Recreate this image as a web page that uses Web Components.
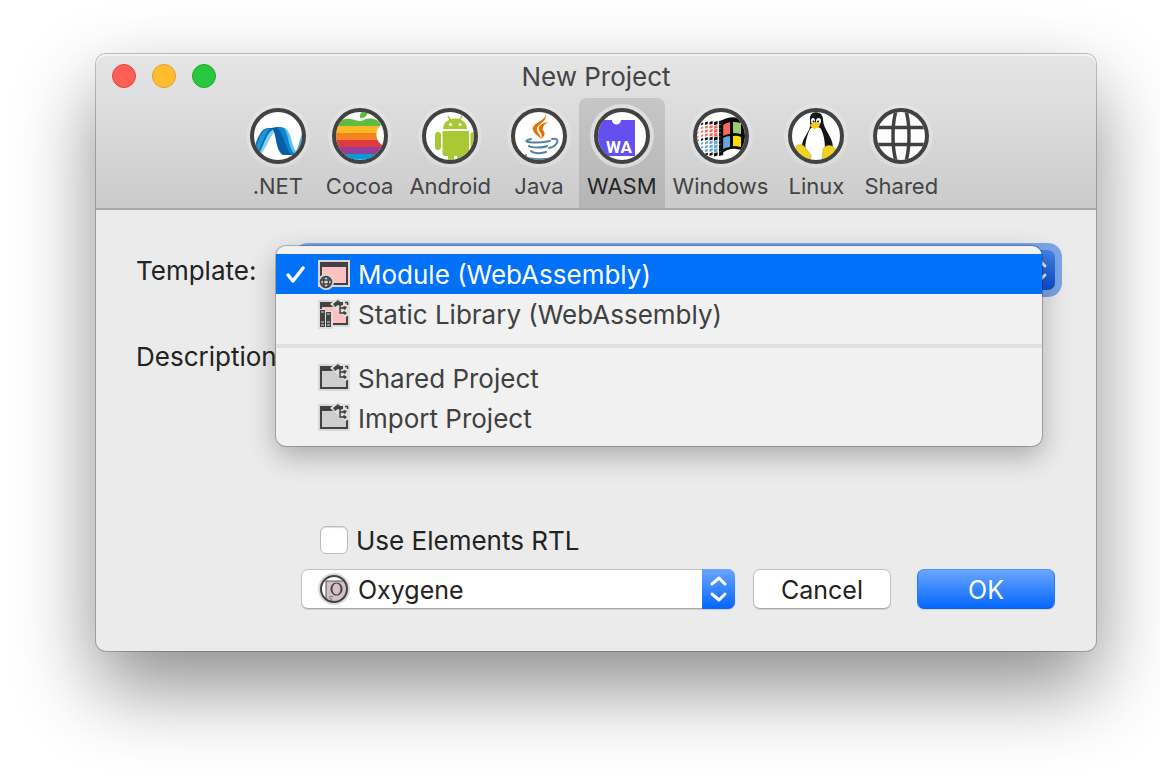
<!DOCTYPE html>
<html lang="en">
<head>
<meta charset="utf-8">
<title>New Project</title>
<style>
    body {
        box-sizing: border-box;
        min-height: 100vh;
        margin: 0;
        padding: 54px 64px 64px 96px;
        background: #fff;
        font-family: Inter, "Liberation Sans", sans-serif;
        font-size: 26px;
        line-height: 40px;
        color: #222;
    }
</style>
</head>
<body>
<new-project-window></new-project-window>

<script>
const define = (name, html, setup) => {
    const template = document.createElement('template');
    template.innerHTML = html;
    customElements.define(name, class extends HTMLElement {
        constructor() {
            super();
            this.attachShadow({ mode: 'open' });
            this.shadowRoot.appendChild(template.content.cloneNode(true));
        }

        connectedCallback() {
            if (setup) setup(this, this.shadowRoot);
        }
    });
};

// The trail of squares behind the Windows flag: they shrink towards the left
const flagTrail = () => {
    const columns = [[4, 1.6], [8, 2.2], [12, 2.8], [16.5, 3.2], [21, 3.6], [26, 4.2]];
    const rows = ['k', 'r', 'r', 'r', 'k', 'b', 'b', 'b', 'k'];
    const colors = { k: '#111', r: '#f7685e', b: '#62a7d9' };
    let out = '';
    rows.forEach((row, j) => {
        columns.forEach(([x, size], i) => {
            const y = 13 + j * 3.9 + [4, 2.5, 1.5, 1, 1, 0][i];
            const fill = i === 5 ? '#111' : colors[row];
            out += `<path d="M${x} ${y}l${size} -1v${size - 0.4}l${-size} 1z" fill="${fill}"/>`;
        });
    });
    return out;
};

// Platform logos, drawn in a 56x56 box and clipped to the inner circle
const platformArt = {
    net: `
        <path d="M2 48C8 26 12 20 19 20H26C19 25 15 38 11 45L4 52Z" fill="#0a6cb4"/>
        <path d="M5 42C9 28 13 21 20 20C15 26 11 38 8 45Z" fill="#1c97d8"/>
        <path d="M9 46C15 34 17 24 24 21L26 22C20 28 17 38 12 45Z" fill="#7fd0f2"/>
        <path d="M22 20Q28 18 33 20C40 24 41 40 46 46L44 47H33C25 42 27 27 22 20Z" fill="#0a5ea6"/>
        <path d="M27 20Q32 18 36 21C41 27 41 40 47 45L42 47C34 40 35 26 27 20Z" fill="#0b86cf"/>
        <path d="M34 20C42 22 41 40 47 44L45 46C38 40 39 27 34 20Z" fill="#5cc3ef"/>
        <path d="M43 47C49 42 49 31 53 24V40L47 47Z" fill="#35b0e8"/>
        <path d="M46 46C50 42 51 36 54 31V42Z" fill="#0a73bd"/>`,
    cocoa: `
        <path d="M28 10C27 5 31 2 36 1C36 7 34 10 28 10Z" fill="#5ebd3e"/>
        <clipPath id="apple"><path d="M4 19C8 9 17 10 23 12Q28 14 32 12C38 9 47 11 49 17C42 23 43 34 52 38L42 53H32Q28 50 24 53H10Q0 35 4 19Z"/></clipPath>
        <g clip-path="url(#apple)">
            <path fill="#5ebd3e" d="M0 0h56v18H0z"/><path fill="#fdb924" d="M0 18h56v7H0z"/>
            <path fill="#f58220" d="M0 25h56v7H0z"/><path fill="#e03a3e" d="M0 32h56v7H0z"/>
            <path fill="#963d97" d="M0 39h56v7H0z"/><path fill="#009ddc" d="M0 46h56v8H0z"/>
        </g>`,
    android: `
        <g fill="#a9c834">
            <path d="M21 21C21 7 45 7 45 21Z"/>
            <path d="M26 8L29 13M40 8L37 13" stroke="#a9c834" stroke-width="1.5"/>
            <rect x="13" y="24" width="6" height="18" rx="3"/>
            <path d="M20.500 23H47V46Q47 48 45 48H41V54H35V48H32V54H26V48H23Q20.500 48 20.500 46Z"/>
            <rect x="48.500" y="24" width="6" height="18" rx="3"/>
        </g>
        <circle cx="28.500" cy="16.500" r="1.500" fill="#fff"/><circle cx="38" cy="16.500" r="1.500" fill="#fff"/>`,
    java: `
        <path d="M34 4C38 13 20 14 22 22C23 26 28 28 30 31C30 27 25 24 26 20C28 15 38 13 34 4Z" fill="#e76f00"/>
        <path d="M38 14C30 15 27 18 28 22C29 25 32 26 30 31C35 27 34 25 32 22C31 19 33 16 38 14Z" fill="#e76f00"/>
        <g fill="none" stroke="#5382a1" stroke-width="2" stroke-linecap="round">
            <path d="M20 31C7 34 24 36 39 33M41 31C50 29 47 38 38 40"/>
            <path d="M18 38C21 40 32 40 36 38M20 43C23 46 31 45 35 44"/>
            <path d="M15 47C9 51 34 53 45 49M23 54Q38 55 46 51"/>
        </g>`,
    wasm: `
        <path d="M4 12H18A4.500 4.500 0 0 0 27 12H41V48H4Z" fill="#654ff0"/>
        <text x="12" y="45" font-family="Roboto, sans-serif" font-size="17" font-weight="700" fill="#fff">WA</text>`,
    windows: `
        <path d="M28 13Q40 5 54 14V45Q40 36 28 46Z" fill="#080808"/>
        <path d="M30 17Q33 15 37 14V26Q34 26 30 28Z" fill="#f7685e"/>
        <path d="M40 14Q44 14 48 15V26Q44 25 40 25Z" fill="#9bc973"/>
        <path d="M30 30Q33 28 37 28V39Q34 39 30 41Z" fill="#62a7d9"/>
        <path d="M40 28Q44 27 48 29V39Q44 38 40 38Z" fill="#fddc00"/>
        ${flagTrail()}`,
    linux: `
        <path d="M22 11C21 2 35 2 35 11C35 22 45 28 45 40L39 48H18L14 38C14 30 23 23 22 16Z" fill="#151515"/>
        <path d="M22 21C24 19 31 18 33 21C38 31 38 47 34 50H21C15 43 17 32 22 21Z" fill="#fff"/>
        <ellipse cx="25" cy="13" rx="2" ry="3" fill="#fff"/><ellipse cx="30.500" cy="13" rx="2.500" ry="3" fill="#fff"/>
        <circle cx="25.500" cy="13.500" r="1"/><circle cx="30" cy="13.500" r="1"/>
        <path d="M22 17Q27 12 32 16Q32 19 27 21Q23 20 22 17Z" fill="#f6c915"/>
        <path d="M8 38Q13 35 16 38L23 47Q24 53 17 52L8 49ZM35 41Q38 36 44 38L50 43L39 52H34Z" fill="#f2d31f" stroke="#c99b10" stroke-width=".5"/>`,
    shared: `
        <g fill="none" stroke="#424242" stroke-width="3.500">
            <ellipse cx="28" cy="28" rx="8" ry="32"/>
            <path d="M3 19.500H53M3 36.500H53"/>
        </g>`
};

define('platform-tab', `
<style>
    :host {
        display: flex;
    }

    button {
        display: flex;
        flex-direction: column;
        align-items: center;
        min-width: 80px;
        padding: 6px 8px 3px;
        border: 0;
        border-radius: 8px 8px 0 0;
        background: none;
        font: inherit;
        font-size: 22px;
        line-height: 37px;
        color: #444;
    }

    :host([selected]) button {
        background: linear-gradient(#c6c6c6, #b5b5b5);
        color: #262626;
    }

    svg {
        width: 64px;
        height: 64px;
    }
</style>
<button type="button" role="tab">
    <svg viewBox="-4 -4 64 64" aria-hidden="true">
        <clipPath id="disc"><circle cx="28" cy="28" r="24"/></clipPath>
        <circle class="halo" cx="28" cy="28" r="32" fill="#fff" opacity=".2"/>
        <circle cx="28" cy="28" r="26" fill="#fff"/>
        <g id="art" clip-path="url(#disc)"></g>
        <circle cx="28" cy="28" r="26" fill="none" stroke="#424242" stroke-width="4"/>
    </svg>
    <slot></slot>
</button>
`, (host, root) => {
    const selected = host.hasAttribute('selected');
    root.getElementById('art').innerHTML = platformArt[host.getAttribute('icon')];
    root.querySelector('button').setAttribute('aria-selected', selected);
    if (selected) root.querySelector('.halo').setAttribute('opacity', '.45');
});

define('window-titlebar', `
<style>
    :host {
        display: block;
        background: linear-gradient(#e6e6e6, #cbcbcb);
        border-bottom: 2px solid #a8a8a8;
        border-radius: 10px 10px 0 0;
        box-shadow: inset 0 2px 0 #f2f2f2;
    }

    .bar {
        display: grid;
        grid-template-columns: 1fr auto 1fr;
        align-items: center;
        padding: 0 16px;
        height: 44px;
    }

    .lights {
        display: flex;
        gap: 16px;
    }

    .lights button {
        width: 24px;
        height: 24px;
        padding: 0;
        border: 1px solid #e2463f;
        border-radius: 50%;
        background: #ff5f57;
    }

    .lights .minimize {
        border-color: #e0a02a;
        background: #febc2e;
    }

    .lights .zoom {
        border-color: #1dad2b;
        background: #28c840;
    }

    h1 {
        margin: 0;
        padding-top: 2px;
        font-size: 26px;
        font-weight: 400;
        line-height: 40px;
        color: #444;
    }

    nav {
        display: flex;
        justify-content: center;
        padding-right: 8px;
    }
</style>
<div class="bar">
    <div class="lights">
        <button type="button" aria-label="Close"></button>
        <button type="button" class="minimize" aria-label="Minimize"></button>
        <button type="button" class="zoom" aria-label="Zoom"></button>
    </div>
    <h1>New Project</h1>
</div>
<nav role="tablist"><slot></slot></nav>
`);

// Template glyphs in a 32x32 box
const frame = fill => `
    <path d="M0 2H32V29H0Z" fill="#d9d9d9"/>
    <path d="M2 4H30V27H2Z" fill="#424242"/>
    <path d="M4 9H28V25H4Z" fill="${fill}"/>`;
const tools = `
    <path d="M12 6L20 0L24 2H32V17L27 19L20 13Z" fill="#dedede"/>
    <path d="M15 6L20 2L22 4L25 4V7L22 8L20 7L17 9Z" fill="#424242"/>
    <path d="M27 4.500H29.500V7M22 8V15H25M22 10H25" fill="none" stroke="#424242" stroke-width="1.500"/>
    <path d="M24 10L26 8L29 9L27 12ZM24 15L26 13L29 15L27 17Z" fill="#424242"/>`;

const templateArt = {
    module: `${frame('#ffc0c0')}
        <circle cx="8" cy="24" r="8" fill="#d9d9d9"/>
        <g fill="none" stroke="#424242" stroke-width="1.500">
            <circle cx="8" cy="24" r="5.500" fill="#d9d9d9"/>
            <ellipse cx="8" cy="24" rx="2.500" ry="5.500"/>
            <path d="M3 22H13M3 26H13"/>
        </g>`,
    library: `${frame('#ffc0c0')}${tools}
        <path d="M0 11H8V13H15V31H0Z" fill="#dedede"/>
        <path d="M2 12H7V29H2ZM8 14H13V29H8Z" fill="#424242"/>
        <path d="M3 14H6M3 24H6M3 27H6M9 16H12M9 24H12M9 27H12" stroke="#dedede"/>`,
    project: `${frame('#cecece')}${tools}`
};

define('template-option', `
<style>
    :host {
        display: block;
    }

    button {
        display: flex;
        align-items: center;
        width: 100%;
        height: 40px;
        padding: 0 10px;
        border: 0;
        background: none;
        font: inherit;
        line-height: 38px;
        color: #404040;
    }

    :host([checked]) button {
        background: #0071f8;
        color: #fff;
    }

    .check {
        width: 20px;
        height: 20px;
        margin-right: 12px;
        visibility: hidden;
    }

    :host([checked]) .check {
        visibility: visible;
    }

    .glyph {
        width: 32px;
        height: 32px;
        margin-right: 8px;
    }

    .text {
        padding-top: 2px;
    }
</style>
<button type="button" role="menuitemradio">
    <svg class="check" viewBox="0 0 20 20" aria-hidden="true">
        <path d="M2 11L7 17L17 4" fill="none" stroke="#fff" stroke-width="3.500" stroke-linecap="round" stroke-linejoin="round"/>
    </svg>
    <svg class="glyph" viewBox="0 0 32 32" aria-hidden="true"></svg>
    <span class="text"><slot></slot></span>
</button>
`, (host, root) => {
    root.querySelector('.glyph').innerHTML = templateArt[host.getAttribute('icon')];
    root.querySelector('button').setAttribute('aria-checked', host.hasAttribute('checked'));
});

define('template-menu', `
<style>
    :host {
        display: block;
        padding: 8px 0;
        border-radius: 10px;
        background: #f1f1f1;
        box-shadow: 0 0 0 1px rgba(0, 0, 0, .22), 0 10px 28px rgba(0, 0, 0, .28);
    }
</style>
<div role="menu"><slot></slot></div>
`);

define('push-button', `
<style>
    :host {
        display: block;
        width: 138px;
    }

    button {
        width: 100%;
        height: 40px;
        padding: 2px 0 0;
        border: 1px solid #c4c4c4;
        border-bottom-color: #aaa;
        border-radius: 7px;
        background: #fff;
        box-shadow: 0 1px 1px rgba(0, 0, 0, .12);
        font: inherit;
        font-size: 25px;
        line-height: 36px;
        color: #222;
    }

    :host([primary]) button {
        border-color: #4c91f8 #2a7af8 #0562f0;
        background: linear-gradient(#6aa5fc, #0466ff);
        color: #fff;
    }
</style>
<button type="button"><slot></slot></button>
`);

define('new-project-window', `
<style>
    :host {
        display: block;
        border-radius: 10px;
        background: #ebebeb;
        box-shadow: 0 0 0 1px rgba(0, 0, 0, .22), 0 36px 80px rgba(0, 0, 0, .45);
    }

    form {
        padding: 40px 41px 41px 40px;
    }

    .row {
        display: grid;
        grid-template-columns: 165px 1fr;
        align-items: start;
        line-height: 42px;
    }

    .row + .row {
        margin-top: 44px;
        min-height: 184px;
    }

    .picker {
        position: relative;
    }

    select {
        appearance: none;
        display: block;
        width: 100%;
        height: 40px;
        padding: 2px 40px 0 56px;
        border: 1px solid #c4c4c4;
        border-bottom-color: #aaa;
        border-radius: 7px;
        background: #fff;
        box-shadow: 0 1px 1px rgba(0, 0, 0, .12);
        font: inherit;
        font-size: 25px;
        line-height: 36px;
        color: #222;
    }

    .arrows {
        position: absolute;
        top: 0;
        right: 0;
        width: 33px;
        height: 40px;
        border-radius: 0 7px 7px 0;
        background: linear-gradient(#6aa5fc, #0466ff);
        pointer-events: none;
    }

    .template select {
        box-shadow: 0 0 0 7px #7ba5e8;
    }

    .template .arrows {
        background: linear-gradient(#4583ec, #0a50d0);
    }

    template-menu {
        position: absolute;
        top: -4px;
        left: -25px;
        right: 13px;
    }

    hr {
        height: 4px;
        margin: 10px 0;
        border: 0;
        background: #e0e0e0;
    }

    .rtl {
        display: flex;
        align-items: center;
        gap: 8px;
        margin: 0 0 9px 184px;
    }

    .rtl input {
        appearance: none;
        width: 28px;
        height: 28px;
        margin: 0;
        border: 1px solid #bcbcbc;
        border-radius: 6px;
        background: #fff;
        box-shadow: inset 0 1px 1px #ddd;
    }

    .rtl label {
        padding-top: 2px;
        line-height: 38px;
    }

    .actions {
        display: flex;
        margin-left: 165px;
    }

    .language {
        flex: 1;
        margin-right: 18px;
    }

    .language .glyph {
        position: absolute;
        top: 4px;
        left: 17px;
        width: 32px;
        height: 32px;
    }

    push-button + push-button {
        margin-left: 26px;
    }
</style>
<window-titlebar>
    <platform-tab icon="net">.NET</platform-tab>
    <platform-tab icon="cocoa">Cocoa</platform-tab>
    <platform-tab icon="android">Android</platform-tab>
    <platform-tab icon="java">Java</platform-tab>
    <platform-tab icon="wasm" selected>WASM</platform-tab>
    <platform-tab icon="windows">Windows</platform-tab>
    <platform-tab icon="linux">Linux</platform-tab>
    <platform-tab icon="shared">Shared</platform-tab>
</window-titlebar>
<form>
    <div class="row">
        <label for="template">Template:</label>
        <div class="picker template">
            <select id="template"></select>
            <svg class="arrows" viewBox="0 0 33 40" aria-hidden="true">
                <path d="M10 16L17 10L23 16M10 25L17 31L23 25" fill="none" stroke="#e3e9f3" stroke-width="3" stroke-linecap="round" stroke-linejoin="round"/>
            </svg>
            <template-menu>
                <template-option icon="module" checked>Module (WebAssembly)</template-option>
                <template-option icon="library">Static Library (WebAssembly)</template-option>
                <hr>
                <template-option icon="project">Shared Project</template-option>
                <template-option icon="project">Import Project</template-option>
            </template-menu>
        </div>
    </div>
    <div class="row">
        <span>Description</span>
    </div>
    <div class="rtl">
        <input type="checkbox" id="rtl">
        <label for="rtl">Use Elements RTL</label>
    </div>
    <div class="actions">
        <div class="picker language">
            <select aria-label="Language"><option>Oxygene</option></select>
            <svg class="glyph" viewBox="0 0 32 32" aria-hidden="true">
                <circle cx="16" cy="16" r="16" fill="#dadada"/>
                <circle cx="16" cy="16" r="13" fill="#fff"/>
                <clipPath id="lens"><circle cx="16" cy="16" r="13"/></clipPath>
                <g clip-path="url(#lens)">
                    <path d="M8 8H32V32H8Z" fill="#d3c0c8" stroke="#555"/>
                    <path fill-rule="evenodd" d="M18.500 9.500a6 6.500 0 1 0 .01 0ZM18.500 10.500a4 5.500 0 1 1 -.01 0Z" fill="#444"/>
                    <path d="M15 24C12 22 10 25 13 26C16 28 12 29 11 27" fill="none" stroke="#666"/>
                </g>
                <circle cx="16" cy="16" r="13" fill="none" stroke="#424242" stroke-width="2"/>
            </svg>
            <svg class="arrows" viewBox="0 0 33 40" aria-hidden="true">
                <path d="M10 15L17 9L23 15M10 25L17 31L23 25" fill="none" stroke="#fff" stroke-width="3" stroke-linecap="round" stroke-linejoin="round"/>
            </svg>
        </div>
        <push-button>Cancel</push-button>
        <push-button primary>OK</push-button>
    </div>
</form>
`);
</script>
</body>
</html>
